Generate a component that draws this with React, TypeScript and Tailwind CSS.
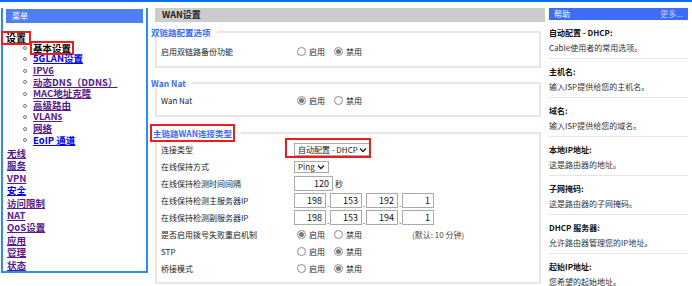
import React from 'react';

const FONT = '"Noto Sans CJK SC", "Noto Sans", sans-serif';

type MenuLink = { label: string; visited?: boolean; current?: boolean };

const subItems: MenuLink[] = [
  { label: '基本设置', current: true },
  { label: '5GLAN设置' },
  { label: 'IPV6', visited: true },
  { label: '动态DNS（DDNS）', visited: true },
  { label: 'MAC地址克隆', visited: true },
  { label: '高级路由', visited: true },
  { label: 'VLANs', visited: true },
  { label: '网络', visited: true },
  { label: 'EoIP 通道' },
];

const topItems: MenuLink[] = [
  { label: '无线', visited: true },
  { label: '服务', visited: true },
  { label: 'VPN', visited: true },
  { label: '安全' },
  { label: '访问限制', visited: true },
  { label: 'NAT', visited: true },
  { label: 'QoS设置', visited: true },
  { label: '应用', visited: true },
  { label: '管理', visited: true },
  { label: '状态', visited: true },
];

const helpItems = [
  { title: '自动配置 - DHCP:', text: 'Cable使用者的常用选项。' },
  { title: '主机名:', text: '输入ISP提供给您的主机名。' },
  { title: '域名:', text: '输入ISP提供给您的域名。' },
  { title: '本地IP地址:', text: '这是路由器的地址。' },
  { title: '子网掩码:', text: '这是路由器的子网掩码。' },
  { title: 'DHCP 服务器:', text: '允许路由器管理您的IP地址。' },
  { title: '起始IP地址:', text: '您希望的起始地址。' },
];

const Radio = ({ checked }: { checked?: boolean }) => (
  <span className="w-[9px] h-[9px] rounded-full border border-[#8a8a8a] bg-white flex items-center justify-center">
    {checked && <span className="w-[5px] h-[5px] rounded-full bg-[#7a7a7a]" />}
  </span>
);

const RadioPair = ({ on }: { on: boolean }) => (
  <div className="flex items-center ml-[3px] text-[8px] text-[#222]">
    <Radio checked={on} />
    <span className="ml-[3px] w-[25px]">启用</span>
    <Radio checked={!on} />
    <span className="ml-[3px]">禁用</span>
  </div>
);

const Box = ({ value, w }: { value: string; w: string }) => (
  <div className={`${w} h-[15px] border border-[#a9a9a9] bg-white text-[9px] text-[#111] flex items-center justify-end pr-[3px]`}>
    {value}
  </div>
);

const IpRow = ({ parts }: { parts: string[] }) => (
  <div className="flex items-end">
    {parts.map((p, i) => (
      <React.Fragment key={i}>
        {i > 0 && <span className="w-[4px] text-[8px] leading-[8px] text-[#333] text-center">.</span>}
        <Box value={p} w="w-[32px]" />
      </React.Fragment>
    ))}
  </div>
);

const Row = ({ label, children }: { label: string; children?: React.ReactNode }) => (
  <div className="flex items-center h-[17px]">
    <span className="w-[133px] text-[8px] text-[#222] whitespace-nowrap">{label}</span>
    {children}
  </div>
);

const Chevron = () => (
  <svg width="8" height="6" viewBox="0 0 8 6" className="ml-auto">
    <path d="M1 1.5 L4 4.5 L7 1.5" fill="none" stroke="#222" strokeWidth="1.4" />
  </svg>
);

const linkCls = (visited?: boolean) =>
  `text-[9.5px] font-bold underline whitespace-nowrap ${visited ? 'text-[#551a8b]' : 'text-[#0000ee]'}`;

export default function App() {
  return (
    <div className="w-[692px] h-[286px] bg-white border-t-2 border-[#0a6cf5] flex overflow-hidden" style={{ fontFamily: FONT }}>
      {/* Menu */}
      <div className="ml-[1px] mt-[6px] w-[147px] h-[265px] border-x-2 border-b-2 border-[#2d8cf0] flex flex-col">
        <div className="mx-[3px] mt-[1px] h-[14px] bg-[#4f7ff2] text-white text-[8px] flex items-center pl-[6px]">菜单</div>
        <div className="mt-[8px] flex -ml-[2px]">
          <span className="px-[3px] h-[14px] border-2 border-[#ee1c1c] text-[10px] font-bold text-black leading-[10px] flex items-center">设置</span>
        </div>
        <div className="flex flex-col -mt-[3px]">
          {subItems.map((it) => (
            <div key={it.label} className="flex items-center h-[11.6px] leading-[11.6px] pl-[20px]">
              <span className="w-[4px] h-[4px] rounded-full border border-[#777] mr-[6px]" />
              {it.current ? (
                <span className="px-[1px] h-[14px] border-2 border-[#ee1c1c] text-[9.5px] font-bold text-black leading-[10px] flex items-center -ml-[3px]">{it.label}</span>
              ) : (
                <span className={linkCls(it.visited)}>{it.label}</span>
              )}
            </div>
          ))}
        </div>
        <div className="flex flex-col pl-[4px] mt-[1px]">
          {topItems.map((it) => (
            <div key={it.label} className="h-[12.4px] leading-[12.4px] flex items-center">
              <span className={linkCls(it.visited)}>{it.label}</span>
            </div>
          ))}
        </div>
      </div>

      {/* Main */}
      <div className="ml-[2px] w-[395px] flex flex-col">
        <div className="ml-[5px] mt-[6px] h-[14px] bg-[#cccccc] text-[9px] font-bold text-[#222] flex items-center pl-[7px]">WAN设置</div>

        <fieldset className="ml-[5px] mr-[4px] mt-[5px] border-2 border-[#e6e6e6] pl-[4px] h-[41px]">
          <legend className="-ml-[10px] pr-[6px] text-[8.5px] font-bold text-[#3d6cf6] leading-[10px]">双链路配置选项</legend>
          <div className="flex items-center h-[17px] mt-[6px]">
            <span className="w-[133px] text-[8px] text-[#222]">启用双链路备份功能</span>
            <RadioPair on={false} />
          </div>
        </fieldset>

        <fieldset className="ml-[5px] mr-[4px] mt-[10px] border-2 border-[#e6e6e6] pl-[4px] h-[39px]">
          <legend className="-ml-[10px] pr-[6px] text-[8.5px] font-bold text-[#3d6cf6] leading-[10px]">Wan Nat</legend>
          <div className="flex items-center h-[17px] mt-[4px]">
            <span className="w-[133px] text-[8px] text-[#222]">Wan Nat</span>
            <RadioPair on={true} />
          </div>
        </fieldset>

        <fieldset className="ml-[5px] mr-[4px] mt-[7px] border-2 border-[#e6e6e6] pl-[4px] h-[160px]">
          <legend className="-ml-[11px] pr-[6px]">
            <span className="block px-[1px] h-[18px] border-2 border-[#ee1c1c] text-[8.5px] font-bold text-[#3d6cf6] leading-[14px]">主链路WAN连接类型</span>
          </legend>
          <div className="flex flex-col mt-[-1px]">
            <Row label="连接类型">
              <div className="relative">
                <div className="absolute -left-[9px] -top-[5px] w-[86px] h-[20px] border-2 border-[#ee1c1c]" />
                <div className="w-[76px] h-[13px] border border-[#a9a9a9] bg-white text-[8px] text-[#222] flex items-center pl-[3px] pr-[2px]">
                  自动配置 - DHCP<Chevron />
                </div>
              </div>
            </Row>
            <Row label="在线保持方式">
              <div className="w-[35px] h-[12px] border border-[#a9a9a9] bg-white text-[8px] text-[#222] flex items-center pl-[3px] pr-[3px]">
                Ping<Chevron />
              </div>
            </Row>
            <Row label="在线保持检测时间间隔">
              <Box value="120" w="w-[39px]" />
              <span className="ml-[2px] text-[8px] text-[#222]">秒</span>
            </Row>
            <Row label="在线保持检测主服务器IP">
              <IpRow parts={['198', '153', '192', '1']} />
            </Row>
            <Row label="在线保持检测副服务器IP">
              <IpRow parts={['198', '153', '194', '1']} />
            </Row>
            <Row label="是否启用拨号失败重启机制">
              <RadioPair on={true} />
              <span className="ml-[50px] text-[8px] text-[#444]">(默认: 10 分钟)</span>
            </Row>
            <Row label="STP">
              <RadioPair on={false} />
            </Row>
            <Row label="桥接模式">
              <RadioPair on={false} />
            </Row>
          </div>
        </fieldset>
      </div>

      {/* Help */}
      <div className="ml-[4px] w-[139px] flex flex-col">
        <div className="mt-[6px] h-[14px] bg-[#3d6cf6] text-white text-[8px] flex items-center justify-between px-[5px]">
          <span>帮助</span>
          <span className="text-[#b8c8fb]">更多...</span>
        </div>
        <div className="flex flex-col">
          {helpItems.map((h, i) => (
            <div key={h.title} className={`pt-[7px] pb-[4px] ${i < helpItems.length - 1 ? 'border-b border-[#e6e6e6]' : ''}`}>
              <div className="text-[8px] font-bold text-[#111] leading-[12px]">{h.title}</div>
              <div className="mt-[3px] text-[8px] text-[#333] leading-[12px]">{h.text}</div>
            </div>
          ))}
        </div>
      </div>
    </div>
  );
}
